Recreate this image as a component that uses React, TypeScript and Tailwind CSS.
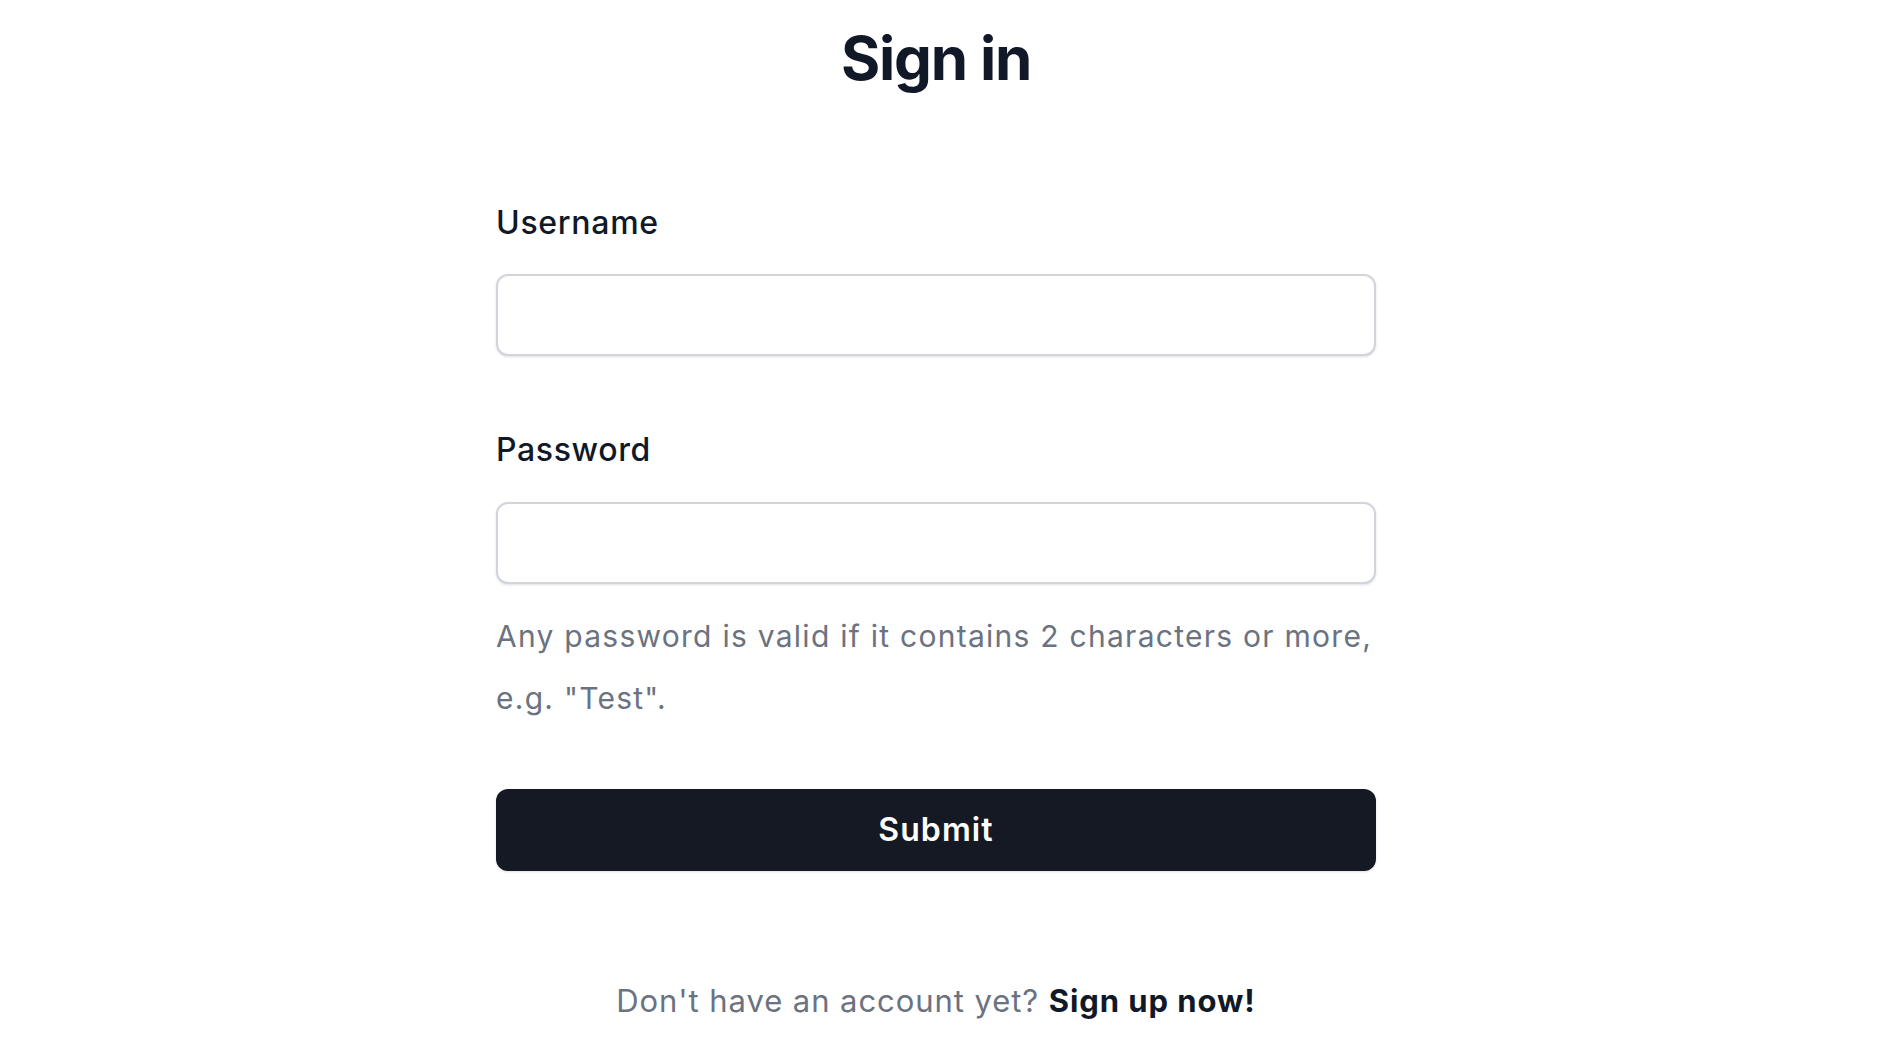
import React from 'react';

export default function App() {
    return (
        <div className="min-h-screen bg-white font-['Inter',sans-serif] text-[#111827] flex justify-center pr-[6px]">
            <div className="w-[880px] flex flex-col pt-[22px]">
                <h1 className="text-center text-[60px] leading-[72px] font-bold tracking-[-0.02em]">
                    Sign in
                </h1>

                <form className="flex flex-col mt-[105px]" onSubmit={(e) => e.preventDefault()}>
                    <label htmlFor="username" className="text-[32px] leading-[48px] font-medium tracking-[0.022em]">
                        Username
                    </label>
                    <input
                        id="username"
                        type="text"
                        className="mt-[27px] h-[82px] w-full rounded-[12px] border-2 border-[#d1d5db] bg-white px-6 text-[32px] shadow-sm outline-none"
                    />

                    <label htmlFor="password" className="mt-[70px] text-[32px] leading-[48px] font-medium tracking-[0.02em]">
                        Password
                    </label>
                    <input
                        id="password"
                        type="password"
                        className="mt-[28px] h-[82px] w-full rounded-[12px] border-2 border-[#d1d5db] bg-white px-6 text-[32px] shadow-sm outline-none"
                    />
                    <p className="mt-[21px] text-[30px] leading-[62px] tracking-[0.042em] text-[#6b7280]">
                        Any password is valid if it contains 2 characters or more, e.g. "Test".
                    </p>

                    <button
                        type="submit"
                        className="mt-[60px] h-[82px] w-full rounded-[12px] bg-[#151923] text-white text-[32px] font-semibold tracking-[0.035em] shadow-sm"
                    >
                        Submit
                    </button>
                </form>

                <p className="mt-[106px] text-center text-[31px] leading-[48px] tracking-[0.03em] text-[#6b7280]">
                    Don't have an account yet?{' '}
                    <a href="#" className="font-bold text-[#111827]">
                        Sign up now!
                    </a>
                </p>
            </div>
        </div>
    );
}
